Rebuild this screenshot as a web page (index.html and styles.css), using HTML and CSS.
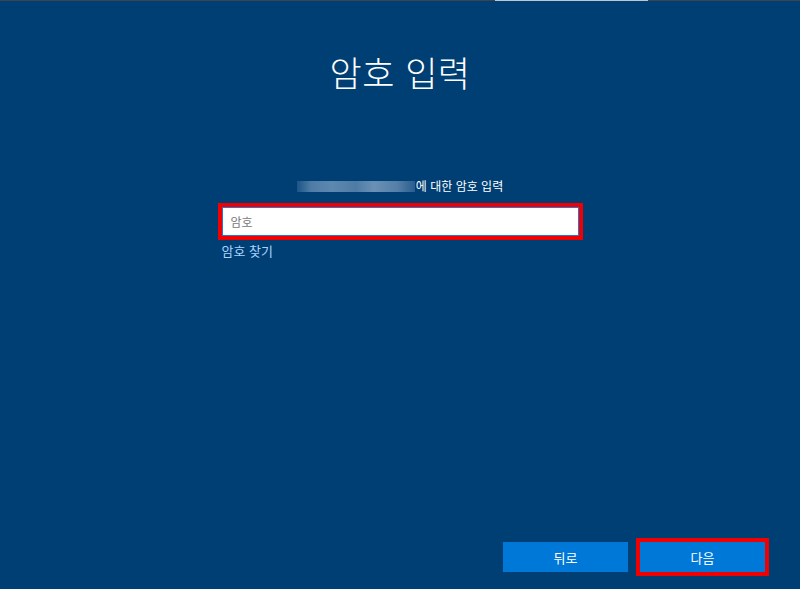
FILE: index.html
```html
<!DOCTYPE html>
<html lang="ko">
<head>
    <meta charset="UTF-8">
    <meta name="viewport" content="width=device-width, initial-scale=1.0">
    <title>암호 입력</title>
    <link rel="stylesheet" href="styles.css">
</head>
<body>
    <div class="topbar">
        <div class="topbar-mark"></div>
    </div>

    <div class="page">
        <h1 class="title">암호 입력</h1>

        <div class="form">
            <div class="form-label">
                <span class="account-blur"></span>에 대한 암호 입력
            </div>
            <input class="password-input highlight" type="password" placeholder="암호">
            <a class="forgot-link" href="#">암호 찾기</a>
        </div>
    </div>

    <div class="footer">
        <button class="btn">뒤로</button>
        <button class="btn highlight">다음</button>
    </div>
</body>
</html>
```

FILE: styles.css
```css
html, body {
    height: 100%;
}
body {
    margin: 0;
    display: flex;
    flex-direction: column;
    background-color: #003f74;
    color: #fff;
    font-family: "Noto Sans CJK KR", "Noto Sans", sans-serif;
    overflow: hidden;
}
.topbar {
    height: 1px;
    background-color: #3b4550;
    flex-shrink: 0;
}
.topbar-mark {
    width: 153px;
    height: 1px;
    margin-left: 495px;
    background-color: #b9c9d8;
}
.page {
    flex: 1;
    display: flex;
    flex-direction: column;
    align-items: center;
}
.title {
    margin: 49px 0 0;
    font-size: 35px;
    font-weight: 300;
    line-height: 44px;
    letter-spacing: 0.5px;
}
.form {
    width: 357px;
    margin-top: 83px;
    display: flex;
    flex-direction: column;
}
.form-label {
    display: flex;
    align-items: center;
    justify-content: center;
    font-size: 12px;
    line-height: 18px;
    margin-bottom: 12px;
}
.account-blur {
    display: inline-block;
    width: 118px;
    height: 11px;
    margin-right: 1px;
    background: linear-gradient(90deg, #1c5587 0%, #4f7ca6 12%, #5d88b0 30%, #4e7ba5 50%, #6a91b5 65%, #557fa8 85%, #2a5d8d 100%);
    filter: blur(0.6px);
}
.password-input {
    box-sizing: border-box;
    height: 29px;
    margin: 0;
    padding: 0 8px;
    border: 1px solid #1f7ad6;
    background: #fff;
    font-family: inherit;
    font-size: 12px;
    color: #333;
}
.password-input::placeholder {
    color: #777;
}
.highlight {
    outline: 4px solid #f00000;
}
.forgot-link {
    margin-top: 6px;
    font-size: 13px;
    line-height: 18px;
    color: #a7d4ff;
    text-decoration: none;
}
.footer {
    display: flex;
    justify-content: flex-end;
    gap: 12px;
    padding: 0 35px 17px 0;
    flex-shrink: 0;
}
.btn {
    width: 125px;
    height: 30px;
    border: none;
    background-color: #0078d7;
    color: #fff;
    font-family: inherit;
    font-size: 13px;
    cursor: pointer;
}
```
